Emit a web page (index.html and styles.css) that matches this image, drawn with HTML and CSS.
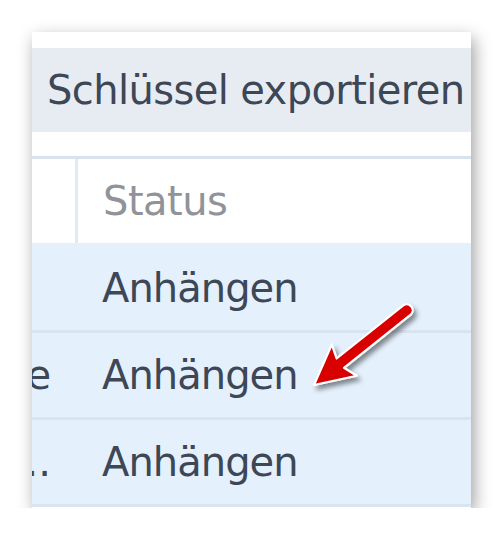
FILE: index.html
```html
<!DOCTYPE html>
<html lang="de">
<head>
<meta charset="utf-8">
<title>Schlüssel exportieren</title>
<link rel="stylesheet" href="styles.css">
</head>
<body>
<div class="stage">
  <div class="panel">
    <div class="top-gap"></div>
    <div class="title-bar">Schlüssel exportieren</div>
    <div class="gap"></div>
    <div class="table">
      <div class="head-row">
        <div class="cell-first"></div>
        <div class="cell-status head">Status</div>
      </div>
      <div class="row">
        <div class="cell-first"></div>
        <div class="cell-status">Anhängen</div>
      </div>
      <div class="row">
        <div class="cell-first"><span>e</span></div>
        <div class="cell-status">Anhängen</div>
      </div>
      <div class="row">
        <div class="cell-first"><span>..</span></div>
        <div class="cell-status">Anhängen</div>
      </div>
    </div>
    <svg class="arrow" viewBox="32 32 439 476" width="439" height="476" aria-hidden="true">
      <defs>
        <filter id="sh" x="-20%" y="-20%" width="150%" height="150%">
          <feDropShadow dx="3" dy="4" stdDeviation="2.5" flood-color="#000" flood-opacity="0.45"/>
        </filter>
      </defs>
      <path d="M314,385 L331.8,344.5 L336.6,358.5 L403.3,305.3 A6,6 0 0 1 410.7,314.7 L344,367.9 L356.7,375.7 Z"
            fill="#d90000" stroke="#ffffff" stroke-width="2.2" stroke-linejoin="round" filter="url(#sh)"/>
    </svg>
  </div>
</div>
</body>
</html>
```

FILE: styles.css
```css
html, body {
  margin: 0;
  padding: 0;
  background: #ffffff;
}

.stage {
  padding: 32px 0 0 32px;
  font-family: "DejaVu Sans", Verdana, sans-serif;
}

.panel {
  position: relative;
  width: 439px;
  height: 476px;
  overflow: hidden;
  background: #ffffff;
  box-shadow: 3px 6px 16px rgba(0, 0, 0, 0.38);
}

.top-gap {
  height: 16px;
}

.title-bar {
  height: 84px;
  background: #e7ecf3;
  display: flex;
  align-items: center;
  padding-left: 15px;
  font-size: 40px;
  letter-spacing: -0.6px;
  color: #3d4756;
  white-space: nowrap;
}

.gap {
  height: 24px;
}

.table {
  border-top: 3px solid #d9e3ed;
}

.head-row,
.row {
  display: flex;
  height: 84px;
  border-bottom: 3px solid #d8e4ef;
}

.head-row {
  background: #ffffff;
  border-bottom-color: #e4f0fc;
}

.row {
  background: #e4f0fc;
}

.cell-first {
  box-sizing: border-box;
  width: 46px;
  flex: none;
  display: flex;
  justify-content: flex-end;
  align-items: center;
  overflow: hidden;
  padding-right: 27px;
  font-size: 40px;
  color: #3d4756;
  white-space: nowrap;
}

.head-row .cell-first {
  border-right: 3px solid #e3e9f0;
}

.cell-status {
  display: flex;
  align-items: center;
  padding-left: 24px;
  font-size: 40px;
  letter-spacing: -0.95px;
  color: #3d4756;
  white-space: nowrap;
}

.cell-status.head {
  padding-left: 25px;
  color: #909399;
  letter-spacing: -0.5px;
}

.arrow {
  position: absolute;
  left: 0;
  top: 0;
  pointer-events: none;
}
```
